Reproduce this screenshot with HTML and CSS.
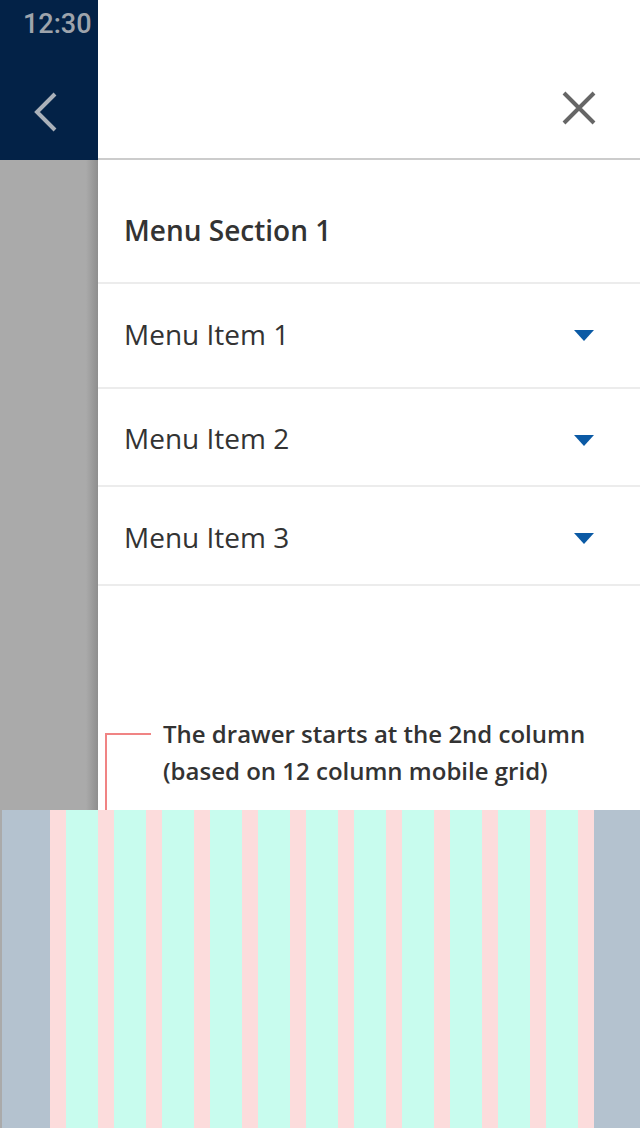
FILE: index.html
```html
<!DOCTYPE html>
<html>
<head>
<meta charset="utf-8">
<link rel="stylesheet" href="styles.css">
</head>
<body>
<div class="screen">
  <div class="top">
    <div class="backdrop">
      <div class="appbar">
        <div class="time">12:30</div>
        <svg class="back" width="24" height="40" viewBox="0 0 24 40"><path d="M21 2 L3 20 L21 38" fill="none" stroke="#aab1ba" stroke-width="4"/></svg>
      </div>
      <div class="dim"></div>
    </div>
    <div class="drawer">
      <div class="drawer-head">
        <svg class="close" width="34" height="34" viewBox="0 0 34 34"><path d="M2 2 L32 32 M32 2 L2 32" fill="none" stroke="#666" stroke-width="4"/></svg>
      </div>
      <div class="section">Menu Section 1</div>
      <div class="item item-1"><span>Menu Item 1</span><span class="caret"></span></div>
      <div class="item item-2"><span>Menu Item 2</span><span class="caret"></span></div>
      <div class="item item-3"><span>Menu Item 3</span><span class="caret"></span></div>
      <div class="note">
        <div class="connector"></div>
        <p class="note-text">The drawer starts at the 2nd column<br>(based on 12 column mobile grid)</p>
      </div>
    </div>
  </div>
  <div class="grid">
    <div class="g-dim"></div>
    <div class="g-margin"></div>
    <div class="g-gut"></div><div class="g-col"></div>
    <div class="g-gut"></div><div class="g-col"></div>
    <div class="g-gut"></div><div class="g-col"></div>
    <div class="g-gut"></div><div class="g-col"></div>
    <div class="g-gut"></div><div class="g-col"></div>
    <div class="g-gut"></div><div class="g-col"></div>
    <div class="g-gut"></div><div class="g-col"></div>
    <div class="g-gut"></div><div class="g-col"></div>
    <div class="g-gut"></div><div class="g-col"></div>
    <div class="g-gut"></div><div class="g-col"></div>
    <div class="g-gut"></div><div class="g-col"></div>
    <div class="g-gut"></div>
    <div class="g-margin g-right"></div>
  </div>
</div>
</body>
</html>
```
FILE: styles.css
```css
* { box-sizing: border-box; }
html, body { margin: 0; padding: 0; }
body { width: 640px; height: 1128px; overflow: hidden; background: #fff; font-family: "Open Sans", "Noto Sans", sans-serif; color: #333; }
.screen { display: flex; flex-direction: column; width: 640px; height: 1128px; }
.top { display: flex; height: 810px; }
.backdrop { width: 98px; display: flex; flex-direction: column; }
.appbar { height: 160px; background: #032247; display: flex; flex-direction: column; align-items: flex-start; }
.time { font-family: Roboto, "Liberation Sans", sans-serif; font-size: 27px; font-weight: 500; color: #9ea4ac; padding: 9px 0 0 23px; line-height: 30px; }
.back { margin: 53px 0 0 34px; display: block; }
.dim { flex: 1; background: linear-gradient(to right, #aaaaaa 0, #aaaaaa 86px, #8e8e8e 98px); }
.drawer { flex: 1; display: flex; flex-direction: column; background: #fff; }
.drawer-head { height: 160px; border-bottom: 2px solid #cccccc; display: flex; justify-content: flex-end; padding: 91px 44px 0 0; }
.close { display: block; }
.section { height: 122px; padding: 17px 0 0 26px; display: flex; align-items: center; font-size: 28px; font-weight: 600; }
.item { border-top: 2px solid #ececec; display: flex; align-items: center; justify-content: space-between; padding: 0 46px 0 26px; font-size: 28px; }
.item-1 { height: 105px; padding-bottom: 4px; }
.item-2 { height: 98px; padding-top: 2px; }
.item-3 { padding-top: 2px; border-bottom: 2px solid #ececec; height: 101px; }
.caret { width: 0; height: 0; margin-top: 4px; border-left: 10px solid transparent; border-right: 10px solid transparent; border-top: 11px solid #0b5aa5; }
.note { margin-top: auto; display: flex; align-items: flex-start; }
.connector { width: 46px; height: 77px; margin: 45px 0 0 7px; border-top: 2px solid #f08484; border-left: 2px solid #f08484; }
.note-text { margin: 0 0 0 12px; padding-top: 27px; font-size: 24px; font-weight: 600; line-height: 37px; color: #333; }
.grid { height: 318px; display: flex; }
.grid > div { height: 100%; }
.g-dim { width: 2px; background: #aaaaaa; }
.g-margin { width: 48px; background: #b4c2cf; }
.g-right { width: 46px; }
.g-gut { width: 16px; background: #fcdcdc; }
.g-col { width: 32px; background: #c8fcee; }
```
